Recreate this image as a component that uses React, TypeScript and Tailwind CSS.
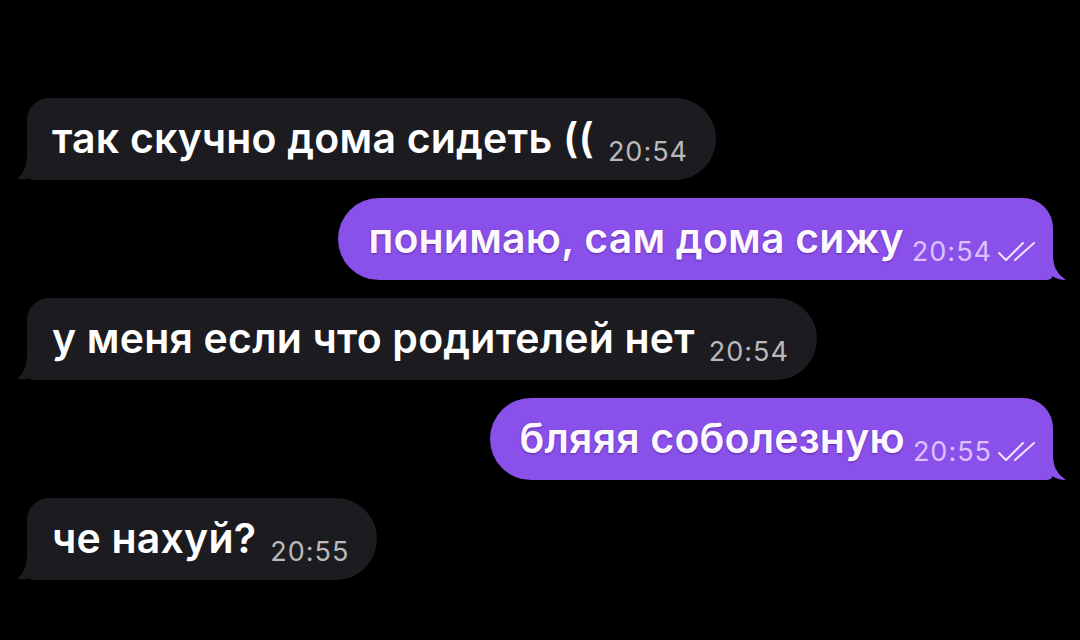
import React from 'react'

type Message = {
  id: number
  text: string
  time: string
  out?: boolean
}

const messages: Message[] = [
  { id: 1, text: 'так скучно дома сидеть ((', time: '20:54' },
  { id: 2, text: 'понимаю, сам дома сижу', time: '20:54', out: true },
  { id: 3, text: 'у меня если что родителей нет', time: '20:54' },
  { id: 4, text: 'бляяя соболезную', time: '20:55', out: true },
  { id: 5, text: 'че нахуй?', time: '20:55' }
]

const font = { fontFamily: 'Inter, "Liberation Sans", Arial, sans-serif' }

// двойная галочка "прочитано"
const ReadChecks = () => (
  <svg width="40" height="22" viewBox="0 0 40 22" fill="none" className="ml-[5px]">
    <path d="M2 12 L9 19 L26 2" stroke="#efe4ff" strokeWidth="2" strokeLinecap="round" strokeLinejoin="round" />
    <path d="M18 19 L37 2" stroke="#efe4ff" strokeWidth="2" strokeLinecap="round" />
  </svg>
)

const TailLeft = () => (
  <svg width="16" height="26" viewBox="0 0 16 26" className="absolute left-[-10px] bottom-0">
    <path d="M10 0 C10 12 7 19 0 25 C5 26 12 25 16 22 L16 0 Z" fill="#1c1b1f" />
  </svg>
)

const TailRight = () => (
  <svg width="18" height="26" viewBox="0 0 18 26" className="absolute right-[-13px] bottom-0">
    <path d="M5 0 C5 12 8 19 18 26 C12 26 7 24 2 21 C-2 23 -4 24 0 26 L0 0 Z" fill="#8a50ea" />
  </svg>
)

const Bubble = ({ m }: { m: Message }) => {
  if (m.out) {
    return (
      <div className="self-end mr-[27px] relative h-[82px] bg-[#8a50ea] rounded-l-[41px] rounded-tr-[30px] rounded-br-[6px] pl-[30px] pr-[16px] flex items-center">
        <span className="text-[41px] font-semibold text-[#fdf7ff] tracking-[0.2px] [text-shadow:0_1px_2px_rgba(40,0,80,0.45)]">{m.text}</span>
        <span className="ml-[8px] mt-[26px] flex items-center">
          <span className="text-[27px] text-[#dcc0ff] tracking-[1px]">{m.time}</span>
          <ReadChecks />
        </span>
        <TailRight />
      </div>
    )
  }
  return (
    <div className="self-start ml-[27px] relative h-[82px] bg-[#1c1b1f] rounded-tl-[22px] rounded-r-[41px] rounded-bl-[6px] pl-[25px] pr-[28px] flex items-center">
      <span className="text-[41px] font-semibold text-white tracking-[0.2px]">{m.text}</span>
      <span className="ml-[14px] mt-[26px] text-[27px] text-[#b9b9bc] tracking-[1px]">{m.time}</span>
      <TailLeft />
    </div>
  )
}

export default function App() {
  return (
    <div className="w-[1080px] h-[640px] bg-black overflow-hidden" style={font}>
      <div className="flex flex-col gap-[18px] pt-[98px]">
        {messages.map((m) => (
          <Bubble key={m.id} m={m} />
        ))}
      </div>
    </div>
  )
}
